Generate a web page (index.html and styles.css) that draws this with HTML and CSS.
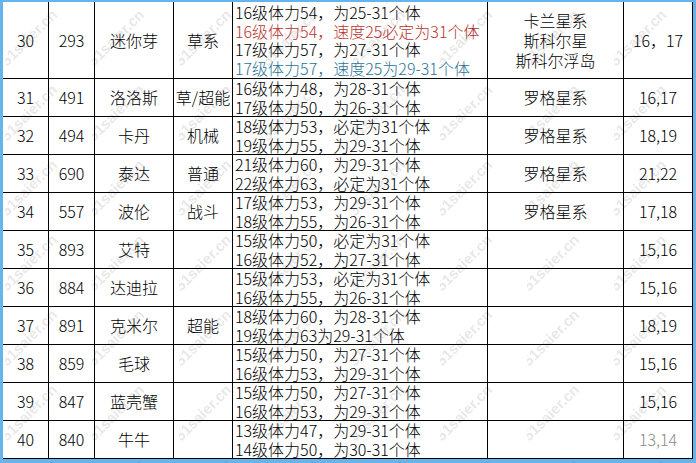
FILE: index.html
```html
<!DOCTYPE html>
<html lang="zh-CN">
<head>
<meta charset="utf-8">
<title>精灵个体表</title>
<link rel="stylesheet" href="styles.css">
</head>
<body>
<div class="frame">
<table class="pets">
  <colgroup>
    <col class="c-no"><col class="c-id"><col class="c-name"><col class="c-type"><col class="c-info"><col class="c-place"><col class="c-lv">
  </colgroup>
  <tbody>
    <tr class="tall">
      <td>30</td><td>293</td><td>迷你芽</td><td>草系</td>
      <td class="info">16级体力54，为25-31个体<br><span class="red">16级体力54，速度25必定为31个体</span><br>17级体力57，为27-31个体<br><span class="teal">17级体力57，速度25为29-31个体</span></td>
      <td class="place">卡兰星系<br>斯科尔星<br>斯科尔浮岛</td><td>16，17</td>
    </tr>
    <tr>
      <td>31</td><td>491</td><td>洛洛斯</td><td>草/超能</td>
      <td class="info">16级体力48，为28-31个体<br>17级体力50，为26-31个体</td>
      <td>罗格星系</td><td>16,17</td>
    </tr>
    <tr>
      <td>32</td><td>494</td><td>卡丹</td><td>机械</td>
      <td class="info">18级体力53，必定为31个体<br>19级体力55，为29-31个体</td>
      <td>罗格星系</td><td>18,19</td>
    </tr>
    <tr>
      <td>33</td><td>690</td><td>泰达</td><td>普通</td>
      <td class="info">21级体力60，为29-31个体<br>22级体力63，必定为31个体</td>
      <td>罗格星系</td><td>21,22</td>
    </tr>
    <tr>
      <td>34</td><td>557</td><td>波伦</td><td>战斗</td>
      <td class="info">17级体力53，为29-31个体<br>18级体力55，为26-31个体</td>
      <td>罗格星系</td><td>17,18</td>
    </tr>
    <tr>
      <td>35</td><td>893</td><td>艾特</td><td></td>
      <td class="info">15级体力50，必定为31个体<br>16级体力52，为27-31个体</td>
      <td></td><td>15,16</td>
    </tr>
    <tr>
      <td>36</td><td>884</td><td>达迪拉</td><td></td>
      <td class="info">15级体力53，必定为31个体<br>16级体力55，为26-31个体</td>
      <td></td><td>15,16</td>
    </tr>
    <tr>
      <td>37</td><td>891</td><td>克米尔</td><td>超能</td>
      <td class="info">18级体力60，为28-31个体<br>19级体力63为29-31个体</td>
      <td></td><td>18,19</td>
    </tr>
    <tr>
      <td>38</td><td>859</td><td>毛球</td><td></td>
      <td class="info">15级体力50，为27-31个体<br>16级体力53，为29-31个体</td>
      <td></td><td>15,16</td>
    </tr>
    <tr>
      <td>39</td><td>847</td><td>蓝壳蟹</td><td></td>
      <td class="info">15级体力50，为27-31个体<br>16级体力53，为29-31个体</td>
      <td></td><td>15,16</td>
    </tr>
    <tr>
      <td>40</td><td>840</td><td>牛牛</td><td></td>
      <td class="info">13级体力47，为29-31个体<br>14级体力50，为30-31个体</td>
      <td></td><td class="faded">13,14</td>
    </tr>
  </tbody>
</table>
</div>
<svg class="watermark" width="696" height="463" viewBox="0 0 696 463" aria-hidden="true">
  <defs>
    <pattern id="wm" width="87" height="75" x="5" y="2" patternUnits="userSpaceOnUse">
      <text x="2" y="65" transform="rotate(-45 2 65)" class="wm-text">51saier.cn</text>
    </pattern>
  </defs>
  <rect width="696" height="463" fill="url(#wm)"/>
</svg>
</body>
</html>
```

FILE: styles.css
```css
html, body {
  margin: 0;
  padding: 0;
}
body {
  position: relative;
  background: #66b4ee;
  width: 696px;
  height: 463px;
  overflow: hidden;
}
.frame {
  padding: 2px 0 0 3px;
}
.pets {
  border-collapse: separate;
  border-spacing: 0;
  table-layout: fixed;
  width: 690px;
  background: #fff;
  font-family: "Noto Sans CJK SC", sans-serif;
  font-weight: 300;
  font-size: 16px;
  color: #000;
}
.c-no { width: 46px; }
.c-id { width: 46px; }
.c-name { width: 79px; }
.c-type { width: 59px; }
.c-info { width: 255px; }
.c-place { width: 136px; }
.c-lv { width: 69px; }

.pets td {
  box-sizing: border-box;
  border-right: 1px solid #000;
  border-bottom: 1px solid #000;
  padding: 0;
  text-align: center;
  vertical-align: middle;
  line-height: 18.5px;
  white-space: nowrap;
}
.pets tr {
  height: 38px;
}
.pets tr.tall {
  height: 77px;
}
.pets td.info {
  text-align: left;
  padding-left: 2px;
}
.pets td.place {
  line-height: 20px;
}
.red { color: #b8322e; }
.teal { color: #2a7398; }
.faded { color: #8a8a8a; }

.watermark {
  position: absolute;
  left: 0;
  top: 0;
  pointer-events: none;
}
.wm-text {
  font-family: "Liberation Sans", sans-serif;
  font-weight: bold;
  font-size: 15px;
  fill: #000;
  fill-opacity: 0.09;
}
```
